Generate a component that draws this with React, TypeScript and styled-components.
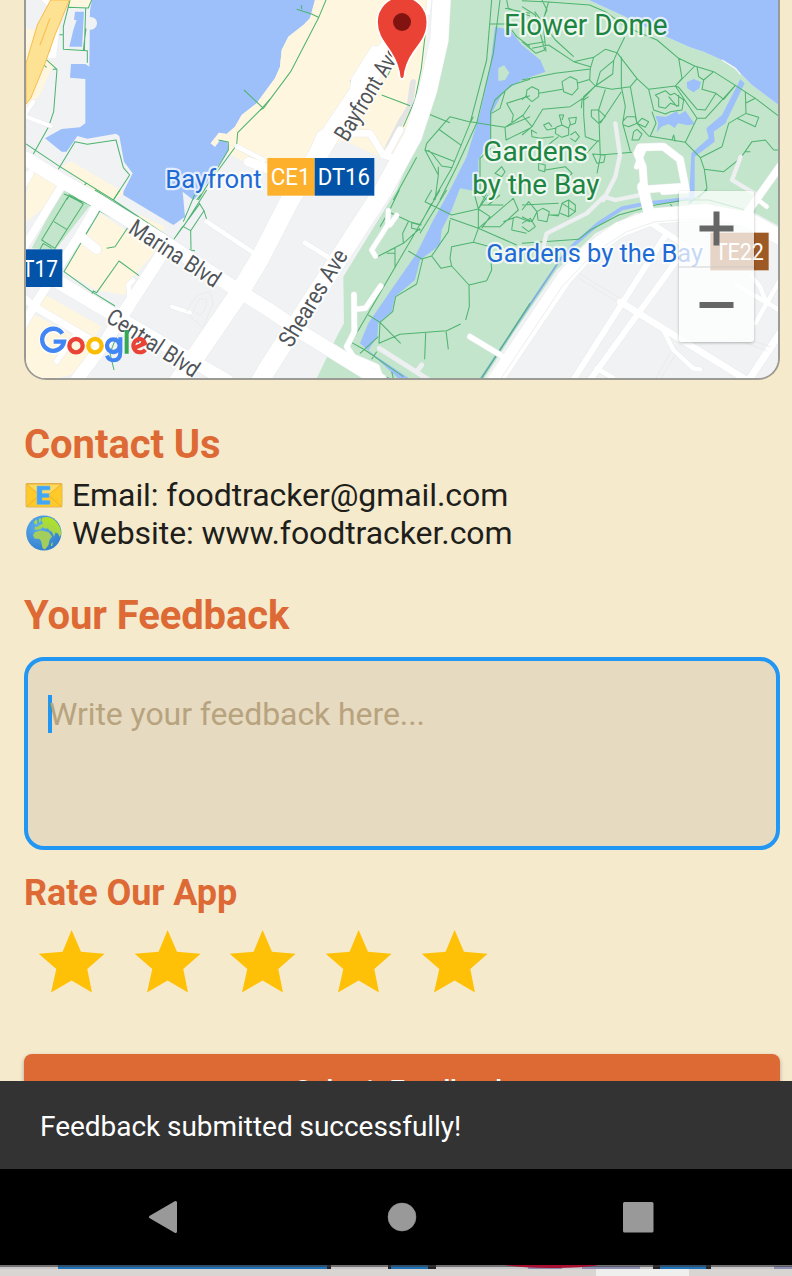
import React from "react";
import styled, { createGlobalStyle } from "styled-components";

const GlobalStyle = createGlobalStyle`
  * { box-sizing: border-box; }
  body { margin: 0; background: #d8d5d2; font-family: Roboto, "Liberation Sans", sans-serif; }
`;

const orange = "#dd6935";

const Screen = styled.div`
  width: 792px;
  height: 1276px;
  display: flex;
  flex-direction: column;
  overflow: hidden;
`;

const Content = styled.main`
  height: 1081px;
  flex: none;
  overflow: hidden;
  background: #f6eacd;
  padding: 0 12px 0 24px;
  display: flex;
  flex-direction: column;
`;

const MapCard = styled.div`
  position: relative;
  flex: none;
  height: 380px;
  border: 2px solid #9c9a94;
  border-top: 0;
  border-radius: 0 0 22px 22px;
  overflow: hidden;
`;

const MapSvg = styled.svg`
  display: block;
  width: 752px;
  height: 378px;
  font-family: Roboto, sans-serif;
`;

const ZoomControls = styled.div`
  position: absolute;
  left: 653px;
  top: 191px;
  width: 75px;
  height: 151px;
  display: flex;
  flex-direction: column;
  background: rgba(255, 255, 255, 0.74);
  border-radius: 3px;
  box-shadow: 0 1px 3px rgba(0, 0, 0, 0.28);
`;

const ZoomButton = styled.div<{ $divider?: boolean }>`
  flex: 1;
  display: flex;
  align-items: center;
  justify-content: center;
  border-bottom: ${(p) => (p.$divider ? "2px solid rgba(200,200,200,.4)" : "0")};
`;

const Heading = styled.h2<{ $size: number; $top: number }>`
  margin: ${(p) => p.$top}px 0 0;
  font-size: ${(p) => p.$size}px;
  line-height: 48px;
  font-weight: 700;
  letter-spacing: -0.08px;
  color: ${orange};
`;

const ContactList = styled.div`
  margin-top: 8px;
  display: flex;
  flex-direction: column;
`;

const ContactRow = styled.div`
  height: 37.5px;
  display: flex;
  align-items: center;
  gap: 9px;
  font-size: 32px;
  line-height: 37.5px;
  letter-spacing: -0.08px;
  color: #201e1a;
  white-space: nowrap;
`;

const Emoji = styled.svg`
  width: 39px;
  height: 37px;
  flex: none;
`;

const FeedbackField = styled.div`
  margin-top: 17px;
  flex: none;
  height: 193px;
  border: 4px solid #2196f3;
  border-radius: 20px;
  background: #e6dac0;
  padding: 34px 20px;
  display: flex;
  align-items: flex-start;
`;

const Caret = styled.span`
  width: 4px;
  height: 38px;
  margin-right: -3px;
  background: #2196f3;
`;

const Placeholder = styled.span`
  font-size: 32px;
  line-height: 38px;
  letter-spacing: -0.08px;
  color: #b8a37f;
`;

const Stars = styled.div`
  display: flex;
  margin-top: -2px;
`;

const Star = styled.svg`
  width: 95.67px;
  height: 96px;
  flex: none;
`;

const SubmitButton = styled.div`
  margin-top: 43px;
  flex: none;
  height: 72px;
  border-radius: 8px;
  background: ${orange};
  box-shadow: 0 2px 4px rgba(0, 0, 0, 0.3);
  color: #fff;
  font-size: 28px;
  line-height: 73px;
  letter-spacing: -0.1px;
  font-weight: 500;
  text-align: center;
`;

const Snackbar = styled.div`
  height: 88px;
  flex: none;
  display: flex;
  align-items: center;
  padding: 2px 40px 0;
  background: #333;
  color: #fff;
  font-size: 28px;
  letter-spacing: -0.04px;
`;

const NavBar = styled.nav`
  height: 96px;
  flex: none;
  background: #000;
`;

const BottomEdge = styled.svg`
  display: block;
  width: 792px;
  height: 11px;
  flex: none;
`;

/* The map is drawn on a grid of three units per pixel. */
const bayWater =
  "M276 0L270 30L268 200L256 192L213 192L210 233L256 237L256 370L240 382L185 387L135 415L185 455L200 455L232 408L262 416L348 401L358 408L372 485L398 520L370 575L370 585L520 675L555 650L548 575L580 600L600 580L685 450L683 425L660 420L645 440L632 430L657 398L680 402L705 380L725 345L770 310L810 255L825 235L840 200L845 150L865 110L910 75L930 55L945 0Z";
const sandsBlock =
  "M945 0L930 55L910 75L865 110L845 150L840 200L825 235L810 255L770 310L725 345L705 380L680 402L657 398L632 430L645 440L660 420L683 425L685 460L740 490L930 480L1030 420L1170 485L1215 400L1270 200L1290 0Z";
const parkArea =
  "M1340 0L1325 150L1305 260L1265 390L1190 570L1030 830L1032 970L1010 1010L948 1140L1450 1140L1540 1000L1670 810L1786 700L1906 640L2116 620L2266 640L2340 680L2340 318L2256 255L2206 205L2166 180L2111 155L2066 140L1966 95L1876 50L1766 0Z";
const river =
  "M1485 80L1530 90L1566 135L1621 180L1636 215L1566 240L1510 275L1475 340L1470 420L1435 480L1435 575L1380 565L1355 630L1325 690L1320 735L1260 780L1245 840L1185 890L1175 935L1135 970L1132 1010L1105 1050L1130 1070L1235 1140L1200 1140L1080 1030L1105 970L1180 860L1250 760L1300 660L1350 570L1400 470L1440 340L1470 200Z";

type RoadSpec = [d: string, width: number];
const roads: RoadSpec[] = [
  ["M136 0L174 40L160 166L138 166", 18],
  ["M78 476L190 545L300 607L480 718L700 862L820 938L910 1000L1140 1142", 42],
  ["M90 520L60 570", 22],
  ["M190 550L60 762", 24],
  ["M290 616L235 710L110 905L60 990", 26],
  ["M240 708L290 748", 28],
  ["M60 775L190 855L330 938L470 1020L680 1142", 40],
  ["M60 882L100 918L290 1030", 22],
  ["M230 1000L170 1084", 16],
  ["M490 755L400 895L320 1020L230 1140", 38],
  ["M400 840L385 855L388 885", 14],
  ["M515 920L570 938", 12],
  ["M78 350L152 378", 12],
  ["M70 350L100 305", 12],
  ["M712 440L790 480", 14],
  ["M745 485L800 505", 28],
  ["M1175 130L1000 390L870 600L780 775L720 875L535 1145", 56],
  ["M1150 148L1120 148L1062 240L1058 290", 18],
  ["M1000 395L965 405L935 470", 28],
  ["M1050 400L1110 400L1150 465L1200 480", 20],
  ["M1200 390L1160 465", 20],
  ["M1288 0L1284 40", 12],
  ["M1325 -10L1318 120L1284 270L1238 410L1150 570L1020 770L800 1110L780 1145", 54],
  ["M620 665L760 758", 14],
  ["M915 728L990 775", 14],
  ["M1165 632L1163 675L1115 750L1126 768", 14],
  ["M1190 646L1170 675", 14],
  ["M1062 884L1063 995L1040 1040L1060 1070L1130 1100L1145 1142", 16],
  ["M1142 858L1096 925L1065 928", 15],
  ["M1410 1010L1510 1070", 16],
  ["M1935 600L1928 500L1912 460L1920 442L1990 440L2040 478L2056 560L1935 568", 22],
  ["M1935 440L1910 500", 15],
  ["M1928 560L1950 650", 32],
  ["M1990 575L2060 570", 18],
  ["M2350 485L2226 660", 22],
  ["M2268 595L2300 620", 12],
  ["M1480 1150L1566 1022L1696 830L1766 755L1856 690L1966 648L2116 636L2246 660L2346 715", 46],
  ["M1940 660L2000 700L1720 1140", 18],
  ["M2000 700L2060 740L1770 1140", 18],
  ["M1860 905L1980 980L2240 1140", 20],
  ["M1985 980L2020 1050L2080 1105L2100 1108", 13],
  ["M1790 1105L1840 1135", 14],
  ["M2346 990L2240 1150", 22],
  ["M2210 855L2346 935", 14],
  ["M2346 830L2266 970", 14],
  ["M2256 830L2280 860L2300 910", 13],
];

const grayRoads: RoadSpec[] = [
  ["M1846 370L1860 465L1846 530L1810 600", 13],
  ["M1946 580L1846 600L1812 590L1760 640L1640 700L1630 740", 13],
  ["M2222 470L2196 540L2280 590", 13],
  ["M1138 1045L1290 1142", 15],
  ["M1265 1095L1250 1115", 15],
];

type PathTile = { x: number; y: number; d: string };
const footpaths: PathTile[] = [
  {
    x: 0,
    y: 0,
    d: "M210 0L190 80L190 148L262 152L262 188M203 22L265 24L275 0M257 24L253 152M258 85L250 150M178 104H190M150 160L142 150M138 178L171 208L161 335L145 382L100 462M78 432L175 497L340 600M175 508L225 425L262 433L348 420L370 503L389 525L340 600M250 560L258 550M732 270L788 323L810 297M788 323L713 398L710 435L590 600M655 420L685 426L685 450L595 600M170 208L158 208M195 570L235 600M200 600L207 588L230 600M130 194L140 202",
  },
  {
    x: 780,
    y: 0,
    d: "M198 0L175 55L92 215L10 325L0 330M110 28L155 42L175 52M125 28L124 15M365 285L450 317M500 65L484 205L465 300L430 380M392 210L376 238M270 242L296 252M400 600L470 472M500 340L570 368M640 350L632 365L690 375L735 382L810 350M695 0L680 180L630 370L575 505L520 600M720 0L700 160L650 370L590 500L540 600M690 72H750M570 350L500 430L495 450L585 485M535 387L605 437M570 350L630 366M495 450L535 525L525 600M505 450L520 465L545 498L577 503M535 500V525M740 0L745 25L810 48M755 90L770 110L810 140M810 238L755 255L705 300L692 335V430M735 275L720 325L695 340M810 287L740 310L760 345L755 368M810 315L790 345L735 382L738 420L810 385M692 445L660 475V580L680 600M705 520L725 500L735 515L725 530ZM735 25L810 40",
  },
  {
    x: 1566,
    y: 0,
    d: "M0 2L80 6L203 15L250 35L310 80L405 120L470 175L518 198L575 215L640 256L700 295L768 347M60 0L75 30L62 60L72 155M80 5L68 45M0 20L40 45L68 150L42 160L0 125M10 135L70 125M30 145L80 135L155 185L205 200M38 35L100 120L155 170M155 185L215 172M308 112L285 158L250 148L215 172L205 205L203 240L220 258L270 268L325 260L345 236L285 158M275 182L235 215L222 258M275 182L272 222L220 258L180 300L178 325M285 158L275 182M298 170V260M345 236L380 268L460 258L518 198M470 175L480 235L460 258L525 355L490 427L380 408L345 370L325 260M460 258L470 262L525 328L550 330L582 280L540 268L545 240L575 215M525 200L530 230L545 240M582 280L605 298L640 256L550 355H525M380 268L395 330L430 342L445 335L480 330L485 300L458 280L445 285L430 272L400 285L410 295V320L430 325L445 310L470 318V285M440 290L465 320M390 335L402 370L385 408M670 275L672 340L645 355L620 370L600 440L535 473L490 427M645 355L700 380L710 352L670 340M670 310L700 295M535 473L547 508L605 515L655 475L690 425L730 420L755 450H768M547 508L555 565L525 600M298 260L310 320L302 370L325 455M298 275L235 370M302 365L315 350H340L345 370L320 380L305 375M345 370L360 355L380 365L370 382L345 370M335 395L345 388L360 402L350 420L330 420ZM230 330L250 350L230 370L208 350V330ZM250 268L230 330L235 470L225 520M220 258L185 290V345L190 410L230 425M235 465L330 457M212 462L250 465L245 487L225 490ZM230 420L180 475M145 230L165 240L168 265L150 285L125 275L120 245ZM165 250L205 238M30 260L50 270L50 290L30 305L12 290L15 270ZM50 280L122 268M0 240L100 220L205 207M0 300L15 285M0 345L30 380L62 328L145 320L190 290M0 405L30 380M120 375L140 385L140 405L120 412L100 400L102 382ZM120 375L112 345L125 345L120 360M140 385L145 370L140 355L163 352L160 370L145 375M100 385L75 390L65 375L80 368L90 380M110 410L90 425L75 440M145 405L160 395L172 410L160 425L145 415M95 410L55 415L30 410L28 390L45 400M50 490L70 495L68 515L50 510ZM70 510L130 500L150 520L120 550L160 570M450 420L455 405L460 425M185 300L200 290M670 455L685 455",
  },
  {
    x: 0,
    y: 570,
    d: "M340 30L520 150L600 40M285 0L520 150L535 165L555 178L585 182M360 0L340 30M200 0L275 48M192 12L272 45M207 15L250 42L165 175L125 150ZM162 95L200 118M130 160L155 175M120 178L130 160M290 60L298 65L192 245L275 305L345 348M290 58L385 110L345 170L320 175M285 68L255 138M275 313L280 303L290 308L357 213L417 257M590 0L550 95M620 0L550 110L572 122L573 178M597 38L612 62L572 122M612 62L620 88M355 425L330 490L342 540M548 110L520 150",
  },
  {
    x: 780,
    y: 570,
    d: "M418 0L388 62L360 110M385 65L450 95L485 105M515 0L495 35L575 75M540 0L275 455M560 0L480 130M515 40L480 105L455 98V115L482 120M445 95L428 130L430 160L480 115M430 160L352 200L405 173V235M380 190H405M445 183L485 207L515 198L565 125L570 90M575 75L655 57L690 80L665 115M570 85L655 115L760 25L775 60L720 110L665 110M655 115L640 157L575 170L570 205L575 228L627 285L680 272L695 240L690 170L640 157M515 198L543 235L575 228M627 285L628 350L617 390M488 207L470 282L407 320L398 365L360 397L357 460L420 433L560 422L602 402M497 428L494 508M558 422L565 478M360 397L422 460M325 375L360 397M355 440L300 490M270 455L315 480L430 560M350 485L335 508M655 115L770 165M655 57L640 0M655 57L685 15M655 57L655 115M665 45H730M655 57L680 10M755 120L800 130M760 85L755 120M730 95L770 80L810 95M395 545L400 565M375 560L400 570M720 15L685 45M810 340L665 565",
  },
  {
    x: 1566,
    y: 570,
    d: "M0 60L20 35L45 65L30 95L0 80M45 65L62 55L82 65L75 95L48 90ZM80 75H110L120 40L140 30L160 45V65L140 80L115 70M120 40L160 65M140 30V80M85 75L110 78M0 45L110 40M0 110L20 125L40 110L25 85L0 100M0 160L170 148L205 120L290 75L400 45L490 30H560L670 60M500 40L555 0M445 42L452 52",
  },
];

const PathLabel = ({
  x, y, width, size, fill, rotate, children,
}: {
  x: number; y: number; width: number; size: number; fill: string; rotate?: number; children: string;
}) => (
  <text
    transform={`translate(${x} ${y}) rotate(${rotate ?? 0})`}
    fontSize={size}
    fill={fill}
    fontWeight={400}
    textLength={width}
    lengthAdjust="spacingAndGlyphs"
    stroke="#fff"
    strokeOpacity={0.72}
    strokeWidth={13}
    strokeLinejoin="round"
    paintOrder="stroke"
  >
    {children}
  </text>
);

const Badge = ({
  x, y, w, fill, label, textX, textWidth,
}: {
  x: number; y: number; w: number; fill: string; label: string; textX: number; textWidth: number;
}) => (
  <g>
    <rect x={x} y={y} width={w} height={113} fill={fill} />
    <text x={textX} y={y + 82} fontSize={70} fill="#fff" textLength={textWidth} lengthAdjust="spacingAndGlyphs">
      {label}
    </text>
  </g>
);

const MapDrawing = () => (
  <MapSvg viewBox="78 0 2256 1134" preserveAspectRatio="none">
    <rect x="78" width="2256" height="1134" fill="#f0f2f4" />
    <g fill="#fef6de">
      <path d="M208 0L203 22L265 22L272 0ZM78 85L110 90L78 190ZM78 330L120 285L163 190L130 180L78 310Z" />
      <path d="M92 498L172 548L130 630L78 600ZM185 500L210 482L375 578L340 600L320 602Z" />
      <path d="M78 600L130 625L78 665ZM300 640L470 750L400 830L375 885L290 870L192 815Z" />
      <path d="M120 875L305 980L280 1020L100 915ZM78 930L290 1045L230 1120L150 1140H78ZM420 645L495 680L480 705L400 660Z" />
    </g>
    <path d={bayWater} fill="#9dc0fa" />
    <path d="M225 35H252L246 140H208L220 90L230 60H222Z" fill="#9dc0fa" />
    <circle cx="272" cy="70" r="19" fill="#f0f2f4" />
    <path d={sandsBlock} fill="#fef6de" />
    <path d="M1230 245Q1240 230 1248 242L1240 310L1195 400L1150 450L1195 360L1220 320Z" fill="#e2e3e3" />
    <path d={parkArea} fill="#c3e5cb" />
    <path d="M1766 0L1876 50L1966 95L2066 140L2111 155L2166 180L2206 205L2256 255L2340 318V0Z" fill="#9dc0fa" />
    <path d="M2166 180L2206 205L2222 224" fill="none" stroke="#f6f6f4" strokeWidth="4" />
    <path d={river} fill="#9dc0fa" />
    <path d="M1495 205L1512 196L1528 218L1515 240L1495 243Z" fill="#c3e5cb" />
    <path d="M190 562L272 614L165 750L95 745Z" fill="#c3e5cb" />
    <g fill="#9dc0fa">
      <path d="M2060 247L2081 237L2103 246L2098 265L2080 277L2062 265Z" />
      <path d="M1966 348L1998 350L2030 334L2037 344L2056 332L2084 372L2064 376L2034 370L2024 384L2006 372L1984 380L1970 397L1975 370Z" />
      <path d="M2221 238L2234 250L2176 370L2141 395L2144 425L2084 470L2084 600L2066 615L2074 460L2126 415L2119 385L2166 345Z" />
    </g>
    <path d="M2070 596L1940 610L1866 625L1796 670L1726 730L1680 780" fill="none" stroke="#9dc0fa" strokeWidth="11" />
    <path d="M1690 765L1566 950L1440 1140" fill="none" stroke="#7fb0e0" strokeWidth="6" />

    <g fill="none" stroke="#4fb371" strokeWidth="3.1" strokeLinejoin="round">
      {footpaths.map((t, i) => (
        <path key={i} d={t.d} transform={`translate(${t.x} ${t.y})`} />
      ))}
    </g>

    <g fill="none" strokeLinecap="round" strokeLinejoin="round">
      {grayRoads.map(([d, w], i) => (
        <path key={i} d={d} stroke="#edeff1" strokeWidth={w} />
      ))}
      {roads.map(([d, w], i) => (
        <path key={i} d={d} stroke="#e8ebec" strokeWidth={w + 3} />
      ))}
      {roads.map(([d, w], i) => (
        <path key={i} d={d} stroke="#fff" strokeWidth={w} />
      ))}
      <g stroke="#e7eaec" strokeWidth="2.5">
        <path d="M1500 1140L1686 860L1780 760L1880 695L1966 665L2116 655L2230 680" />
        <path d="M1740 822L1860 895M1736 834L1850 905M2026 1065L1980 1140M2010 1060L1965 1140M2190 1000L2310 1040M2185 1010L2300 1052" />
        <path d="M560 935L590 885L630 875L640 910L610 980M580 930L600 895L620 900L615 930L600 945ZM565 945L610 985" />
      </g>
    </g>
    <path d="M152 0H208L165 105L135 190L92 295L78 312V190L112 75Z" fill="#fee294" stroke="#f8bd4c" strokeWidth="3" />
    <path d="M150 55L120 135" stroke="#f8c45c" strokeWidth="4" />

    <PathLabel x={496} y={563} width={289} size={79} fill="#1f6bd6">Bayfront</PathLabel>
    <PathLabel x={1512} y={106} width={491} size={87} fill="#1c8541">Flower Dome</PathLabel>
    <PathLabel x={1450} y={483} width={313} size={85} fill="#1c8541">Gardens</PathLabel>
    <PathLabel x={1417} y={581} width={381} size={85} fill="#1c8541">by the Bay</PathLabel>
    <PathLabel x={1459} y={786} width={650} size={79} fill="#1f6bd6">Gardens by the Bay</PathLabel>
    <PathLabel x={1042} y={428} width={316} size={71} rotate={-59} fill="#505459">Bayfront Ave</PathLabel>
    <PathLabel x={874} y={1046} width={328} size={71} rotate={-58.5} fill="#505459">Sheares Ave</PathLabel>
    <PathLabel x={382} y={696} width={310} size={70} rotate={33} fill="#505459">Marina Blvd</PathLabel>
    <PathLabel x={314} y={963} width={316} size={70} rotate={33} fill="#505459">Central Blvd</PathLabel>

    <Badge x={802} y={474} w={142} fill="#fdb02b" label="CE1" textX={812} textWidth={120} />
    <Badge x={944} y={474} w={179} fill="#0354a9" label="DT16" textX={953} textWidth={157} />
    <Badge x={70} y={748} w={117} fill="#0354a9" label="T17" textX={66} textWidth={108} />
    <Badge x={2131} y={698} w={175} fill="#9e5a24" label="TE22" textX={2144} textWidth={148} />

    <path
      d="M1206 -10C1162 -10 1131 25 1131 66C1131 105 1152 127 1171 155C1190 184 1197 205 1199 231Q1206 244 1213 231C1215 205 1224 181 1242 155C1263 127 1282 106 1282 66C1282 25 1250 -10 1206 -10Z"
      fill="#ea4335"
      stroke="#fff"
      strokeWidth="5"
    />
    <circle cx="1206" cy="66" r="27" fill="#811411" />

    <g fill="none" strokeLinecap="butt">
      <path d="M187 1001A33 33 0 1 0 193 1025H161" stroke="#fff" strokeOpacity="0.7" strokeWidth="22" />
      <path d="M187 1001A33 33 0 1 0 192 1025H161" stroke="#4285f4" strokeWidth="13" />
      <circle cx="228" cy="1037" r="20" stroke="#ea4335" strokeWidth="13" />
      <circle cx="285" cy="1037" r="20" stroke="#fbbc04" strokeWidth="13" />
      <circle cx="340" cy="1037" r="19" stroke="#4285f4" strokeWidth="13" />
      <path d="M361 1012V1056Q361 1081 340 1081Q326 1081 321 1067" stroke="#4285f4" strokeWidth="12" />
      <path d="M380 990V1061" stroke="#34a853" strokeWidth="12" />
      <path d="M399 1046L435 1030Q431 1017 418 1017A20 20 0 1 0 436 1049" stroke="#ea4335" strokeWidth="12" />
    </g>
  </MapSvg>
);

const starPoints = "47.6,15 57,36.7 80.6,38.7 63.3,54 68,77.6 47.6,65.4 27,77.6 32.3,54 14.7,38.7 38.6,36.7";

export default function App() {
  return (
    <Screen>
      <GlobalStyle />
      <Content>
        <MapCard>
          <MapDrawing />
          <ZoomControls>
            <ZoomButton $divider>
              <svg width="35" height="36" viewBox="0 0 35 36">
                <path d="M0.5 18.5H34.5M17.5 1.5V35.5" stroke="#666" strokeWidth="6" />
              </svg>
            </ZoomButton>
            <ZoomButton>
              <svg width="35" height="36" viewBox="0 0 35 36">
                <path d="M0.5 18H34.5" stroke="#666" strokeWidth="6" />
              </svg>
            </ZoomButton>
          </ZoomControls>
        </MapCard>

        <Heading $size={40} $top={41}>Contact Us</Heading>
        <ContactList>
          <ContactRow>
            <Emoji viewBox="0 0 39 37">
              <rect x="2" y="6.5" width="36" height="23.5" rx="1" fill="#ffca28" stroke="#dfb65a" />
              <path d="M2.5 7H37.5L22 20Q20 21.5 18 20Z" fill="#ffd95e" stroke="#e5a735" strokeWidth="0.8" />
              <path d="M2.5 29.5L16 18M37.5 29.5L24 18" stroke="#e9a832" strokeWidth="0.9" />
              <path d="M13 9H26V13H18V16.5H25V20.5H18V23.5H26V27.5H13Z" fill="#42a5f5" stroke="#74b9dd" strokeWidth="0.6" />
            </Emoji>
            <span>Email: foodtracker@gmail.com</span>
          </ContactRow>
          <ContactRow>
            <Emoji viewBox="0 0 39 37">
              <defs>
                <radialGradient id="sea" cx="0.35" cy="0.3" r="0.8">
                  <stop offset="0" stopColor="#5caeef" />
                  <stop offset="1" stopColor="#2f7bc8" />
                </radialGradient>
                <linearGradient id="land" x1="1" y1="0" x2="0.4" y2="1">
                  <stop offset="0" stopColor="#b5ea10" />
                  <stop offset="1" stopColor="#9ccb68" />
                </linearGradient>
              </defs>
              <circle cx="19.8" cy="18" r="17.6" fill="url(#sea)" />
              <path
                d="M18 3Q25 0 31 5.5Q37 11 37.2 19L35.5 22L34 18.5L31.5 17.5L30 21.5L28 17L25.5 15.5L24 13.5L20.5 13.5L18.5 12L17 14L13 15L10.5 14.5L11 12L14 11.5L16 10L19 8.5L17.5 5.5Z"
                fill="url(#land)"
              />
              <path d="M11 17L17 15.5L24.5 17L28 21.5L25.5 25L24.5 30L21 34.5L18.5 33L17 26L15.5 24L10.5 23.5L9 20Z" fill="#a3ce5e" />
              <path d="M10 7L12 4.5L13.5 6L12.5 9.5L10.5 9ZM15 4L17 3L16.5 7L15 7.5ZM27 29L28.8 27L28.2 31L27 31Z" fill="#a5d84c" />
            </Emoji>
            <span>Website: www.foodtracker.com</span>
          </ContactRow>
        </ContactList>

        <Heading $size={40} $top={40}>Your Feedback</Heading>
        <FeedbackField>
          <Caret />
          <Placeholder>Write your feedback here...</Placeholder>
        </FeedbackField>

        <Heading $size={36} $top={19}>Rate Our App</Heading>
        <Stars>
          {[1, 2, 3, 4, 5].map((n) => (
            <Star key={n} viewBox="0 0 95.67 96">
              <polygon points={starPoints} fill="#ffc107" />
            </Star>
          ))}
        </Stars>
        <SubmitButton>Submit Feedback</SubmitButton>
      </Content>

      <Snackbar>Feedback submitted successfully!</Snackbar>
      <NavBar>
        <svg width="792" height="96" viewBox="0 0 792 96">
          <g fill="#999" stroke="#999" strokeLinejoin="round">
            <path d="M150.5 48L175.5 33.5V62.5Z" strokeWidth="3" />
            <circle cx="402" cy="48" r="14" strokeWidth="0.5" />
            <rect x="624.5" y="34.5" width="27.5" height="27.5" strokeWidth="3" />
          </g>
        </svg>
      </NavBar>
      <BottomEdge viewBox="0 0 792 11">
        <rect width="792" height="11" fill="#d9d5d3" />
        <rect width="792" height="4" fill="#c9c9cb" />
        <rect x="58" width="270" height="4" fill="#1e73b9" />
        <rect x="391" width="38" height="4" fill="#1e73b9" />
        <rect x="660" width="46" height="4" fill="#1e73b9" />
        <path d="M327 0H331V4H327ZM388 0H391V4H388ZM428 0H436V4H428ZM653 0H660V4H653ZM706 0H711V4H706Z" fill="#242429" />
        <path d="M582 1H640V4H582ZM528 1H562V4H528ZM774 1H792V4H774Z" fill="#8b8db1" />
        <rect width="792" height="2" fill="#3a3535" fillOpacity="0.6" />
        <path d="M505 0H598Q586 3 550 3Q520 3 505 0Z" fill="#a70f31" />
        <rect x="596" y="4" width="93" height="7" fill="#efefed" />
      </BottomEdge>
    </Screen>
  );
}
